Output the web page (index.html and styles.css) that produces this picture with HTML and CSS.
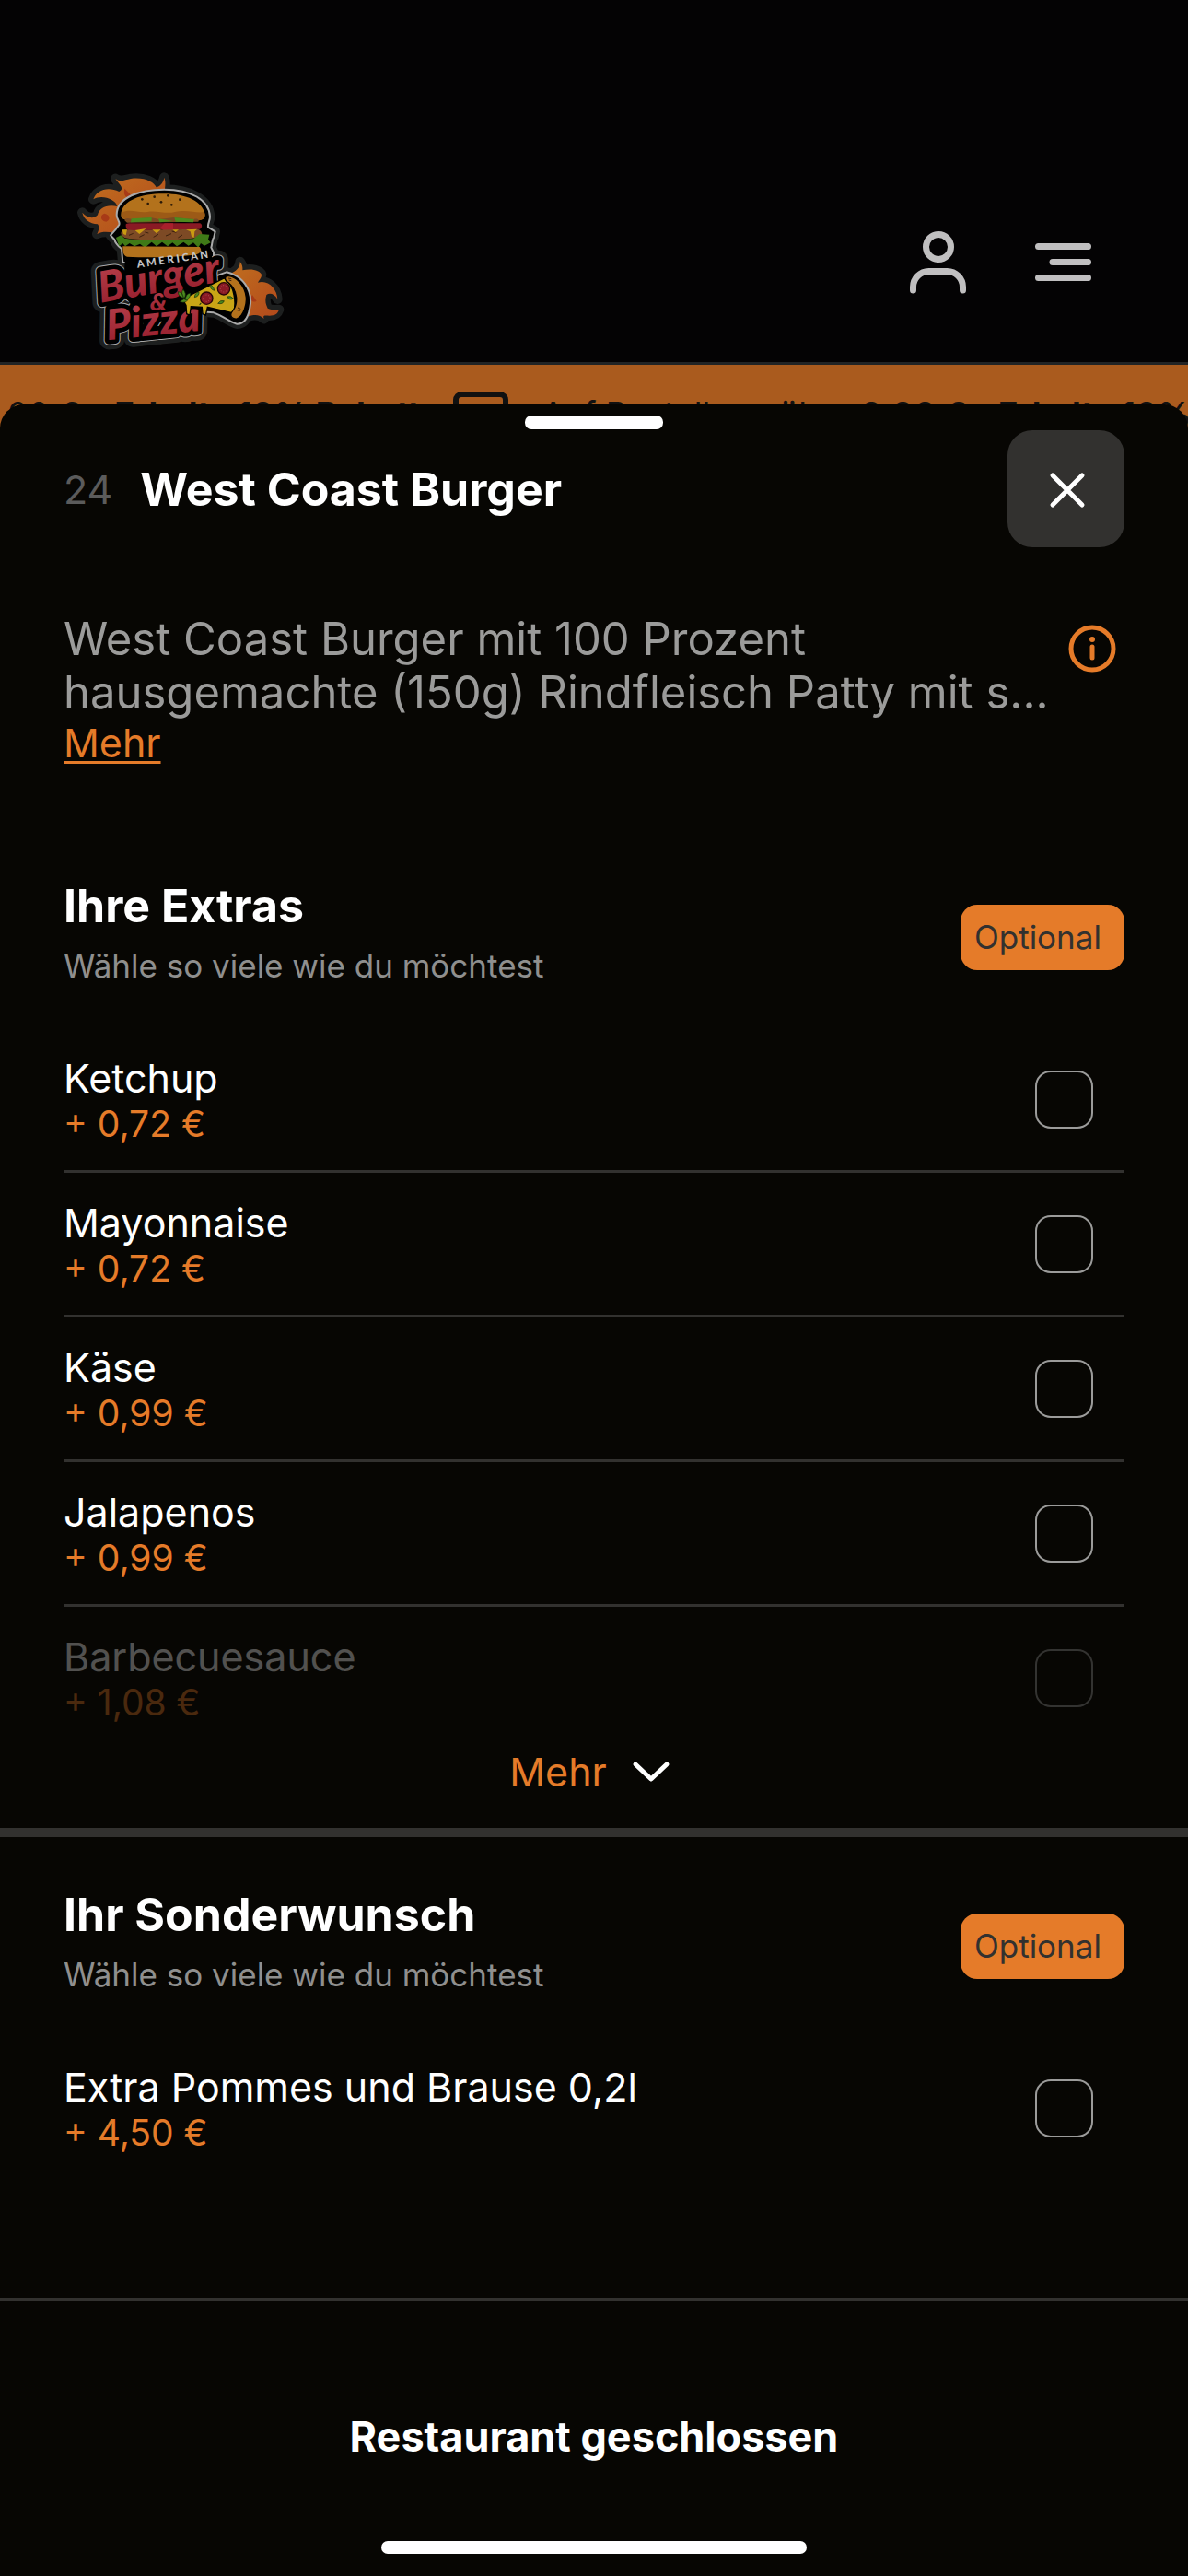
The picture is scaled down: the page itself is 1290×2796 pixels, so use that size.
FILE: index.html
```html
<!DOCTYPE html>
<html lang="de">
<head>
    <meta charset="utf-8">
    <meta name="viewport" content="width=device-width, initial-scale=1">
    <title>American Burger &amp; Pizza</title>
    <link rel="stylesheet" href="styles.css">
</head>
<body>

<header class="topbar">
    <a class="logo" href="#" aria-label="American Burger &amp; Pizza">
        <svg viewBox="0 0 780 660" width="260" height="220">
            <defs>
                <linearGradient id="fire" x1="0" y1="0" x2="1" y2="1">
                    <stop offset="0" stop-color="#c0701f"/>
                    <stop offset="1" stop-color="#b3481b"/>
                </linearGradient>
                <linearGradient id="red" x1="0" y1="0" x2="0" y2="1">
                    <stop offset="0" stop-color="#b8424d"/>
                    <stop offset="1" stop-color="#941c2b"/>
                </linearGradient>
                <path id="flame-left" d="M106 252 C114 238 113 226 108 220 C82 218 62 204 58 182 C72 200 96 204 108 190 C112 166 140 154 172 162 C168 140 122 122 94 139 C104 108 142 96 178 114 C198 104 178 90 166 72 C182 84 196 76 216 72 C262 66 292 84 299 100 C314 96 322 84 325 68 C332 86 326 102 326 120 L190 250 C160 250 130 238 106 252 Z"/>
                <path id="flame-right" d="M535 385 C560 372 572 362 572 342 C582 356 580 364 580 370 C612 362 638 372 642 384 C642 396 634 402 630 410 C664 400 692 430 694 464 C684 446 668 442 658 450 C652 470 656 482 662 494 C678 502 694 498 699 498 C694 514 684 518 668 518 C656 518 644 514 650 528 C636 514 620 514 600 520 Z"/>
                <path id="burger-shape" d="M170 190 C170 132 246 107 325 107 C410 107 472 140 474 196 C474 210 466 216 468 230 L491 244 L487 262 C480 270 482 286 478 296 L486 312 L486 345 L190 345 L186 300 C174 290 166 284 163 270 L150 256 L166 238 L178 222 C182 210 170 206 170 190 Z"/>
                <path id="slice-shape" d="M528 376 C580 388 610 432 606 478 C602 516 590 545 562 545 C540 540 520 520 486 508 L380 500 L366 450 L400 430 L450 404 Z"/>
            </defs>

            <!-- grey halo -->
            <g fill="#1d1f1f" stroke="#1d1f1f" stroke-width="32" stroke-linejoin="round">
                <use href="#flame-left"/>
                <use href="#flame-right"/>
                <use href="#burger-shape"/>
                <use href="#slice-shape"/>
                <g class="logo-script" stroke-width="62">
                    <text x="118" y="476" font-size="140" transform="rotate(-10 118 476)">Burger</text>
                    <text x="140" y="598" font-size="138" transform="rotate(-6 140 598)">Pizza</text>
                </g>
            </g>

            <use href="#flame-left" fill="url(#fire)"/>
            <use href="#flame-right" fill="url(#fire)"/>
            <path d="M130 185 C112 192 120 210 136 212 C150 206 150 190 130 185 Z M196 104 C190 130 206 140 220 128 Z" fill="#a83a17"/>
            <path d="M612 450 C600 466 612 478 626 470 Z" fill="#a83a17"/>

            <!-- light rim with the black body over it -->
            <g fill="#000" stroke="#aaa" stroke-width="6" stroke-linejoin="round">
                <use href="#burger-shape"/>
                <use href="#slice-shape"/>
                <g class="logo-script" stroke-width="34">
                    <text x="118" y="476" font-size="140" transform="rotate(-10 118 476)">Burger</text>
                    <text x="140" y="598" font-size="138" transform="rotate(-6 140 598)">Pizza</text>
                </g>
            </g>
            <g fill="#000" stroke="#000" stroke-linejoin="round">
                <path d="M200 310 H480 V380 L500 410 L480 500 L240 520 L190 440 Z"/>
                <g class="logo-script" stroke-width="28">
                    <text x="118" y="476" font-size="140" transform="rotate(-10 118 476)">Burger</text>
                    <text x="140" y="598" font-size="138" transform="rotate(-6 140 598)">Pizza</text>
                </g>
            </g>

            <!-- burger -->
            <path d="M184 190 C186 140 256 120 325 121 C396 121 452 146 458 190 C458 204 446 208 430 208 L208 206 C190 206 184 200 184 190 Z" fill="#b3721c"/>
            <path d="M190 180 C220 170 240 184 270 180 C300 174 330 188 360 180 C400 170 430 186 456 180 C462 204 446 208 430 208 L208 206 C190 206 186 196 190 180 Z" fill="#9c5a16"/>
            <g fill="#2b1a08">
                <circle cx="253" cy="139" r="4"/><circle cx="293" cy="131" r="4"/><circle cx="337" cy="127" r="4"/>
                <circle cx="376" cy="140" r="4"/><circle cx="315" cy="148" r="4"/><circle cx="272" cy="153" r="4"/><circle cx="349" cy="157" r="4"/>
            </g>
            <path d="M196 208 C196 200 206 199 218 203 L284 199 L308 204 L358 198 L422 204 C432 200 440 206 436 212 L204 215 Z" fill="#7a4a22"/>
            <path d="M218 202 L284 198 L284 211 L216 214 Z M306 202 L356 210 L310 214 Z M358 198 L422 204 L420 214 L362 212 Z" fill="#4d8a1e"/>
            <path d="M200 224 C198 216 210 216 240 217 H440 C450 218 450 234 440 236 L212 241 C202 238 200 232 200 224 Z" fill="#8a1a24"/>
            <path d="M312 232 L326 217 H354 V240 H322 Z" fill="#a8202c"/>
            <path d="M186 244 C190 232 216 240 232 240 L430 236 C444 236 452 250 446 260 C420 272 230 276 196 264 C184 258 182 250 186 244 Z" fill="#7d4a25"/>
            <path d="M210 256 l14 -6 M244 262 l16 -8 M290 262 l16 -9 M330 258 l18 -7 M370 264 l14 -9 M262 246 l12 3 M350 243 l14 4" stroke="#3c200d" stroke-width="3" fill="none"/>
            <path d="M188 238 H204 L200 256 L192 252 Z M230 240 L266 234 L244 252 Z M286 238 H314 L300 250 Z M352 238 H372 L362 246 Z M396 238 L432 236 L424 244 L422 264 L414 260 L410 244 Z" fill="#c99b12"/>
            <path d="M168 264 L184 256 L196 266 L240 272 L330 272 L420 268 L440 252 L472 254 L468 270 L476 280 L456 290 L444 282 L436 296 L420 280 L404 290 L388 278 L366 292 L352 280 L336 292 L318 278 L300 292 L284 278 L262 296 L246 284 L228 292 L212 282 L198 292 L190 282 L178 292 Z" fill="#3f7a17"/>
            <path d="M190 292 L440 294 C452 306 440 320 420 320 C340 330 260 328 204 326 C190 322 190 306 190 292 Z" fill="#b3721c"/>

            <!-- lettering -->
            <g class="logo-script" fill="url(#red)">
                <text x="118" y="476" font-size="140" transform="rotate(-10 118 476)">Burger</text>
                <text x="140" y="598" font-size="138" transform="rotate(-6 140 598)">Pizza</text>
                <text x="278" y="502" font-size="82">&amp;</text>
            </g>
            <text class="logo-small" x="238" y="362" font-size="34" transform="rotate(-8 238 362)">A M E R I C A N</text>

            <!-- pizza slice -->
            <path d="M384 464 L520 396 C556 420 560 480 550 510 L466 490 L460 516 L450 512 L448 490 L412 488 L408 516 L398 512 L396 484 Z" fill="#c9a516" stroke="#000" stroke-width="4"/>
            <path d="M528 388 C520 396 524 406 534 410 C566 436 568 480 544 508 C538 520 548 530 562 528 C584 520 594 480 592 458 C588 420 560 388 528 388 Z" fill="#b3721c" stroke="#000" stroke-width="4"/>
            <path d="M534 396 l10 2 M536 402 l8 2 M564 492 l10 4 M562 500 l10 2" stroke="#3c200d" stroke-width="3"/>
            <g fill="#8a1a24" stroke="#2a0509" stroke-width="4">
                <circle cx="519" cy="430" r="20"/><circle cx="463" cy="461" r="20"/>
            </g>
            <g fill="none" stroke="#b9575c" stroke-width="3" stroke-dasharray="3 5">
                <circle cx="519" cy="430" r="11"/><circle cx="463" cy="461" r="11"/>
            </g>
            <path d="M474 418 q12 2 14 18 q-14 -4 -14 -18 Z M424 458 q0 -14 14 -18 q2 14 -14 18 Z M500 478 q8 -12 20 -8 q-4 12 -20 8 Z M530 456 q12 -4 20 6 q-12 8 -20 -6 Z M440 482 q6 -10 4 -2 Z M370 440 q16 2 18 20 q-18 -4 -18 -20 Z M386 432 q14 14 4 30 q-12 -14 -4 -30 Z M410 444 q2 18 -16 22 q0 -18 16 -22 Z M376 472 q12 -12 26 -6 q-8 14 -26 6 Z" fill="#4d8a1e" stroke="#14280a" stroke-width="2"/>
        </svg>
    </a>
    <nav class="topbar-nav">
        <button class="icon-btn" aria-label="Konto">
            <svg class="line-icon" viewBox="0 0 70 80" width="70" height="80">
                <circle cx="36" cy="28" r="13.5"/>
                <path d="M8.5 75v-3.5a17 17 0 0 1 17-17h20a17 17 0 0 1 17 17v3.5"/>
            </svg>
        </button>
        <button class="icon-btn" aria-label="Menü">
            <svg class="line-icon" viewBox="0 0 70 80" width="70" height="80">
                <path d="M8.5 27.5h54M24 44.5h38.5M8.5 61.5h54"/>
            </svg>
        </button>
    </nav>
</header>

<div class="promo">
    <span>00 € - <b>Erhalte 10% Rabatt</b></span>
    <svg class="promo-icon" viewBox="0 0 60 60" width="60" height="60">
        <rect x="3" y="3" width="54" height="50" rx="6"/>
        <path d="M30 15v24M18 27h24"/>
    </svg>
    <span>Auf Bestellung über <b>0,00 € - Erhalte 10%</b></span>
</div>

<main class="sheet">
    <div class="handle"></div>

    <div class="sheet-title">
        <span class="item-no">24</span>
        <h1>West Coast Burger</h1>
        <button class="close-btn" aria-label="Schließen">
            <svg viewBox="0 0 44 44" width="44" height="44"><path d="M7 7l32 32M39 7L7 39"/></svg>
        </button>
    </div>

    <div class="description">
        <div class="description-text">
            <p>West Coast Burger mit 100 Prozent hausgemachte (150g) Rindfleisch Patty mit s...</p>
            <a href="#">Mehr</a>
        </div>
        <button class="info-btn" aria-label="Produktinfo">
            <svg viewBox="0 0 52 52" width="52" height="52">
                <circle class="ring" cx="26" cy="26" r="23"/>
                <circle cx="26" cy="16" r="3"/>
                <path class="stem" d="M26 24v12"/>
            </svg>
        </button>
    </div>

    <section class="group">
        <div class="group-head">
            <div>
                <h2>Ihre Extras</h2>
                <p>Wähle so viele wie du möchtest</p>
            </div>
            <span class="badge">Optional</span>
        </div>
        <ul class="options">
            <li><label><span class="option"><span class="name">Ketchup</span><span class="price">+ 0,72 €</span></span><input type="checkbox"></label></li>
            <li><label><span class="option"><span class="name">Mayonnaise</span><span class="price">+ 0,72 €</span></span><input type="checkbox"></label></li>
            <li><label><span class="option"><span class="name">Käse</span><span class="price">+ 0,99 €</span></span><input type="checkbox"></label></li>
            <li><label><span class="option"><span class="name">Jalapenos</span><span class="price">+ 0,99 €</span></span><input type="checkbox"></label></li>
            <li class="faded"><label><span class="option"><span class="name">Barbecuesauce</span><span class="price">+ 1,08 €</span></span><input type="checkbox"></label></li>
        </ul>
        <button class="more-btn">
            Mehr
            <svg viewBox="0 0 44 28" width="44" height="28"><path d="M5 6l17 16L39 6"/></svg>
        </button>
    </section>

    <section class="group">
        <div class="group-head">
            <div>
                <h2>Ihr Sonderwunsch</h2>
                <p>Wähle so viele wie du möchtest</p>
            </div>
            <span class="badge">Optional</span>
        </div>
        <ul class="options">
            <li><label><span class="option"><span class="name">Extra Pommes und Brause 0,2l</span><span class="price">+ 4,50 €</span></span><input type="checkbox"></label></li>
        </ul>
    </section>

    <footer class="order-bar">
        <button class="order-btn">Restaurant geschlossen</button>
        <div class="home-bar"></div>
    </footer>
</main>

</body>
</html>
```
FILE: styles.css
```css
* {
    box-sizing: border-box;
}
body {
    margin: 0;
    min-height: 100vh;
    display: flex;
    flex-direction: column;
    background-color: #040304;
    color: #fff;
    font-family: Inter, "Liberation Sans", sans-serif;
    overflow-x: hidden;
}
h1, h2, p, ul {
    margin: 0;
    padding: 0;
}
button {
    padding: 0;
    border: 0;
    background: none;
    color: inherit;
    font-family: inherit;
    cursor: pointer;
}
svg {
    display: block;
}

/* page behind the sheet */
.topbar {
    display: flex;
    justify-content: space-between;
    align-items: center;
    padding: 170px 101px 3px 70px;
    border-bottom: 3px solid #222425;
}
.topbar-nav {
    display: flex;
    gap: 66px;
}
.line-icon {
    fill: none;
    stroke: #c0bfc0;
    stroke-width: 7;
    stroke-linecap: round;
}
.logo-script {
    font-family: Lato, sans-serif;
    font-weight: 900;
    font-style: italic;
}
.logo-small {
    font-family: Lato, sans-serif;
    font-weight: 900;
    fill: #c4c4c4;
}
.promo {
    display: flex;
    align-items: flex-start;
    gap: 36px;
    height: 112px;
    padding: 29px 0 0 8px;
    background-color: #aa5b1e;
    color: #111;
    font-size: 36px;
    line-height: 48px;
    white-space: nowrap;
    overflow: hidden;
}
.promo-icon {
    flex: none;
    fill: none;
    stroke: #111;
    stroke-width: 6;
}

/* sheet */
.sheet {
    position: relative;
    flex: 1;
    display: flex;
    flex-direction: column;
    margin-top: -69px;
    padding-top: 12px;
    border-radius: 26px 26px 0 0;
    background-color: #070603;
}
.handle {
    align-self: center;
    width: 150px;
    height: 15px;
    margin-bottom: 1px;
    border-radius: 7px;
    background-color: #fff;
}
.sheet-title {
    display: flex;
    align-items: center;
    gap: 30px;
    padding: 0 69px;
}
.sheet-title h1 {
    flex: 1;
    font-size: 50px;
    font-weight: 700;
    line-height: 60px;
}
.item-no {
    color: #5b5b5b;
    font-size: 43px;
}
.close-btn {
    display: flex;
    align-items: center;
    justify-content: center;
    width: 127px;
    height: 127px;
    border-radius: 27px;
    background-color: #32312f;
}
.close-btn svg, .more-btn svg {
    fill: none;
    stroke: #fff;
    stroke-width: 5;
    stroke-linecap: round;
    stroke-linejoin: round;
}
.description {
    display: flex;
    align-items: flex-start;
    justify-content: space-between;
    padding: 71px 78px 122px 69px;
}
.description p {
    color: #9b9b9a;
    font-size: 49px;
    line-height: 58px;
}
.description a {
    color: #e57b29;
    font-size: 43px;
    line-height: 50px;
    text-underline-offset: 4px;
    text-decoration-thickness: 3px;
}
.info-btn {
    flex: none;
    margin: 13px 0 0 8px;
}
.info-btn svg {
    fill: #e57b29;
}
.info-btn .ring {
    fill: none;
    stroke: #e57b29;
    stroke-width: 5;
}
.info-btn .stem {
    stroke: #e57b29;
    stroke-width: 5;
    stroke-linecap: round;
}

/* option groups */
.group {
    padding: 0 69px;
}
.group + .group {
    padding-top: 54px;
    border-top: 10px solid #32312f;
}
.group-head {
    display: flex;
    align-items: center;
    justify-content: space-between;
    padding-bottom: 46px;
}
.group-head h2 {
    margin-bottom: 13px;
    font-size: 50px;
    font-weight: 700;
    line-height: 60px;
}
.group-head p {
    color: #8f8f8e;
    font-size: 35px;
    line-height: 44px;
}
.badge {
    width: 178px;
    margin-top: 12px;
    padding: 0 15px;
    border-radius: 18px;
    background-color: #e57b29;
    color: #32312f;
    font-size: 35px;
    line-height: 71px;
}
.options {
    list-style: none;
}
.options li + li {
    border-top: 3px solid #32312f;
}
.options label {
    display: flex;
    align-items: center;
    justify-content: space-between;
    height: 154px;
    padding-right: 34px;
}
.option {
    display: flex;
    flex-direction: column;
    gap: 2px;
}
.name {
    font-size: 43px;
    line-height: 52px;
}
.price {
    color: #e57b29;
    font-size: 39px;
    line-height: 44px;
}
.options input {
    appearance: none;
    width: 63px;
    height: 63px;
    margin: 0;
    border: 2px solid #9b9b9a;
    border-radius: 17px;
}
.options input:checked {
    background-color: #e57b29;
}
.faded label {
    opacity: .3;
}
.more-btn {
    display: flex;
    align-items: center;
    justify-content: center;
    gap: 26px;
    width: 100%;
    padding: 0 8px 36px 0;
    color: #e57b29;
    font-size: 43px;
    line-height: 50px;
}

/* bottom bar */
.order-bar {
    display: flex;
    flex-direction: column;
    align-items: center;
    margin-top: auto;
    padding: 120px 69px 24px;
    border-top: 3px solid #32312f;
}
.order-btn {
    margin-bottom: 85px;
    font-size: 45px;
    font-weight: 700;
    line-height: 56px;
}
.home-bar {
    width: 462px;
    height: 14px;
    border-radius: 7px;
    background-color: #fff;
}
```
